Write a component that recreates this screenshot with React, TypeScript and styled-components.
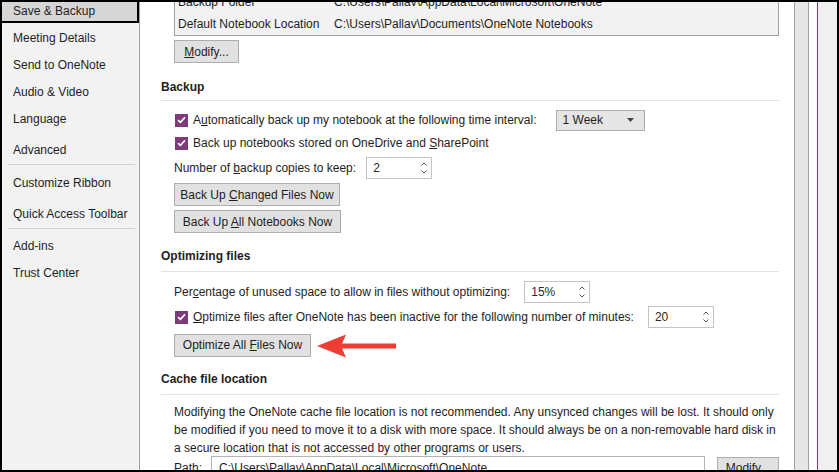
import styled, { createGlobalStyle } from "styled-components";

const GlobalStyle = createGlobalStyle`
  html, body {
    margin: 0;
    padding: 0;
    background: #000;
  }
  body {
    font-family: "Liberation Sans", Arial, sans-serif;
    font-size: 12px;
    color: #1e1e1e;
  }
`;

const menu = [
  { label: "Save & Backup", gap: -2, selected: true },
  { label: "Meeting Details", gap: 4 },
  { label: "Send to OneNote", gap: 4 },
  { label: "Audio & Video", gap: 4 },
  { label: "Language", gap: 4 },
  { label: "Advanced", gap: 8, rule: true },
  { label: "Customize Ribbon", gap: 7 },
  { label: "Quick Access Toolbar", gap: 8, rule: true },
  { label: "Add-ins", gap: 6 },
  { label: "Trust Center", gap: 4 },
];

function Check() {
  return (
    <CheckBox>
      <svg width="9" height="8" viewBox="0 0 9 8">
        <path d="M1 4.2 L3.4 6.4 L8 1.4" fill="none" stroke="#fff" strokeWidth="1.6" />
      </svg>
    </CheckBox>
  );
}

function Spinner({ value, width = 66 }: { value: string; width?: number }) {
  return (
    <SpinBox style={{ width }}>
      <span>{value}</span>
      <SpinArrows>
        <svg width="6" height="4" viewBox="0 0 6 4">
          <path d="M0.5 3.5 L3 1 L5.5 3.5" fill="none" stroke="#555" strokeWidth="1" />
        </svg>
        <svg width="6" height="4" viewBox="0 0 6 4">
          <path d="M0.5 0.5 L3 3 L5.5 0.5" fill="none" stroke="#555" strokeWidth="1" />
        </svg>
      </SpinArrows>
    </SpinBox>
  );
}

function App() {
  return (
    <>
      <GlobalStyle />
      <Frame>
        <Sidebar>
          {menu.map((m) => (
            <div key={m.label}>
              <MenuItem $gap={m.gap} $selected={!!m.selected}>
                {m.label}
              </MenuItem>
              {m.rule && <MenuRule />}
            </div>
          ))}
        </Sidebar>

        <Main>
          <Scroller>
            {/* locations table, scrolled partly out of view */}
            <Indent>
              <LocationTable>
                <Cell>Backup Folder</Cell>
                <Cell>C:\Users\Pallav\AppData\Local\Microsoft\OneNote</Cell>
                <Cell>Default Notebook Location</Cell>
                <Cell>C:\Users\Pallav\Documents\OneNote Notebooks</Cell>
              </LocationTable>
              <Button $w={65} $mt={4}>
                <span>
                  <u>M</u>odify...
                </span>
              </Button>
            </Indent>

            <Heading $mt={15}>Backup</Heading>
            <Rule $mt={4} />
            <Indent>
              <Row $mt={7} $h={24}>
                <Check />
                <Label>
                  A<u>u</u>tomatically back up my notebook at the following time interval:
                </Label>
                <Dropdown>
                  <span>1 Week</span>
                  <svg width="7" height="4" viewBox="0 0 7 4">
                    <path d="M0 0 H7 L3.5 4 Z" fill="#444" />
                  </svg>
                </Dropdown>
              </Row>
              <Row $h={22}>
                <Check />
                <Label>
                  Back up notebooks stored on OneDrive and <u>S</u>harePoint
                </Label>
              </Row>
              <Row $mt={2} $h={24}>
                <Label $flush>
                  Number of <u>b</u>ackup copies to keep:
                </Label>
                <Spacer $w={10} />
                <Spinner value="2" />
              </Row>
              <Button $w={166} $mt={3}>
                <span>
                  Back Up <u>C</u>hanged Files Now
                </span>
              </Button>
              <Button $w={167} $mt={4}>
                <span>
                  Back Up <u>A</u>ll Notebooks Now
                </span>
              </Button>
            </Indent>

            <Heading $mt={14}>Optimizing files</Heading>
            <Rule $mt={6} />
            <Indent>
              <Row $mt={9} $h={22}>
                <Label $flush>
                  Per<u>c</u>entage of unused space to allow in files without optimizing:
                </Label>
                <Spacer $w={14} />
                <Spinner value="15%" />
              </Row>
              <Row $mt={3} $h={22}>
                <Check />
                <Label>
                  <u>O</u>ptimize files after OneNote has been inactive for the following number of minutes:
                </Label>
                <Spacer $w={14} />
                <Spinner value="20" />
              </Row>
              <Row $mt={5} $h={24}>
                <Button $w={137}>
                  <span>
                    Optimize All <u>F</u>iles Now
                  </span>
                </Button>
                <Callout width="80" height="26" viewBox="0 0 80 26">
                  <rect x="22" y="10.5" width="57" height="5" fill="#ee3d33" />
                  <polygon points="0,13 29,1.5 24,13 29,24.5" fill="#ee3d33" />
                </Callout>
              </Row>
            </Indent>

            <Heading $mt={13}>Cache file location</Heading>
            <Rule $mt={6} />
            <Indent>
              <Paragraph>
                <div>
                  Modifying the OneNote cache file location is not recommended. Any unsynced changes will be lost. It should only
                </div>
                <div>
                  be modified if you need to move it to a disk with more space. It should always be on a non-removable hard disk in
                </div>
                <div>a secure location that is not accessed by other programs or users.</div>
              </Paragraph>
              <Row $mt={-1} $h={24}>
                <Label $flush>Path:</Label>
                <PathInput>C:\Users\Pallav\AppData\Local\Microsoft\OneNote</PathInput>
                <Button $w={62}>Modify...</Button>
              </Row>
            </Indent>
          </Scroller>
        </Main>

        <ScrollTrack />
        <PaneEdge />
      </Frame>
    </>
  );
}

export default App;

const Frame = styled.div`
  width: 839px;
  height: 472px;
  box-sizing: border-box;
  border: 2px solid #000;
  display: flex;
  overflow: hidden;
  background: #fff;
`;

const Sidebar = styled.nav`
  flex: none;
  width: 137px;
  background: #f2f2f2;
  border-right: 1px solid #a0a0a0;
  display: flex;
  flex-direction: column;
  overflow: hidden;
`;

const MenuItem = styled.div<{ $gap: number; $selected: boolean }>`
  height: 23px;
  line-height: 23px;
  margin-top: ${(p) => p.$gap}px;
  padding-left: 11px;
  white-space: nowrap;
  box-sizing: border-box;

  ${(p) =>
    p.$selected &&
    `
    margin-left: -2px;
    width: 139px;
    padding-left: 11px;
    line-height: 19px;
    background: #d6d6d6;
    border: 2px solid #000;
  `}
`;

const MenuRule = styled.div`
  height: 1px;
  background: #d4d4d4;
  margin: 2px 4px 0 6px;
`;

const Main = styled.main`
  flex: none;
  width: 654px;
  overflow: hidden;
`;

const Scroller = styled.div`
  margin-top: -12px;
  padding: 0 15px 0 21px;
`;

const Indent = styled.div`
  padding-left: 13px;
  display: flex;
  flex-direction: column;
  align-items: flex-start;
`;

const LocationTable = styled.div`
  align-self: stretch;
  display: grid;
  grid-template-columns: 156px 1fr;
  grid-auto-rows: 22px;
  padding-left: 3px;
  background: #f2f2f2;
  border: 1px solid #a0a0a0;
`;

const Cell = styled.div`
  line-height: 22px;
  white-space: nowrap;
`;

const Button = styled.div<{ $w?: number; $mt?: number }>`
  box-sizing: border-box;
  width: ${(p) => (p.$w ? `${p.$w}px` : "auto")};
  height: 23px;
  margin-top: ${(p) => p.$mt ?? 0}px;
  display: flex;
  align-items: center;
  justify-content: center;
  background: #e1e1e1;
  border: 1px solid #adadad;
  white-space: nowrap;
  flex: none;
`;

const Heading = styled.div<{ $mt: number }>`
  margin-top: ${(p) => p.$mt}px;
  height: 18px;
  line-height: 18px;
  font-weight: 700;
`;

const Rule = styled.div<{ $mt: number }>`
  margin-top: ${(p) => p.$mt}px;
  height: 1px;
  background: #e2e2e2;
`;

const Row = styled.div<{ $mt?: number; $h: number }>`
  margin-top: ${(p) => p.$mt ?? 0}px;
  height: ${(p) => p.$h}px;
  display: flex;
  align-items: center;
  align-self: stretch;
  white-space: nowrap;
`;

const CheckBox = styled.span`
  flex: none;
  width: 13px;
  height: 13px;
  margin-left: 1px;
  background: #7e3a7a;
  display: flex;
  align-items: center;
  justify-content: center;
`;

const Label = styled.span<{ $flush?: boolean }>`
  margin-left: ${(p) => (p.$flush ? 0 : 5)}px;
`;

const Spacer = styled.span<{ $w: number }>`
  flex: none;
  width: ${(p) => p.$w}px;
`;

const Dropdown = styled.div`
  box-sizing: border-box;
  margin-left: 19px;
  width: 89px;
  height: 21px;
  padding: 0 10px 0 6px;
  display: flex;
  align-items: center;
  justify-content: space-between;
  background: #e5e5e5;
  border: 1px solid #adadad;
`;

const SpinBox = styled.div`
  box-sizing: border-box;
  height: 22px;
  padding: 0 4px 0 6px;
  display: flex;
  align-items: center;
  justify-content: space-between;
  background: #fff;
  border: 1px solid #c4c4c4;
  color: #2a2a2a;
`;

const SpinArrows = styled.span`
  display: flex;
  flex-direction: column;
  gap: 4px;
`;

const Callout = styled.svg`
  flex: none;
  margin-left: 6px;
  margin-top: 1px;
`;

const Paragraph = styled.div`
  margin-top: 8px;
  line-height: 18px;
  white-space: nowrap;
`;

const PathInput = styled.div`
  box-sizing: border-box;
  margin: 0 12px 0 9px;
  width: 496px;
  height: 24px;
  padding-left: 7px;
  display: flex;
  align-items: center;
  background: #fff;
  border: 1px solid #b4b4b4;
`;

const ScrollTrack = styled.div`
  flex: none;
  width: 15px;
  box-sizing: border-box;
  background: #e6e6e6;
  border-left: 1px solid #a0a0a0;
  border-right: 1px solid #a0a0a0;
`;

const PaneEdge = styled.div`
  flex: none;
  width: 19px;
  margin-left: 8px;
  background: #f0f0f0;
  border-left: 1px solid #7b3a78;
`;
